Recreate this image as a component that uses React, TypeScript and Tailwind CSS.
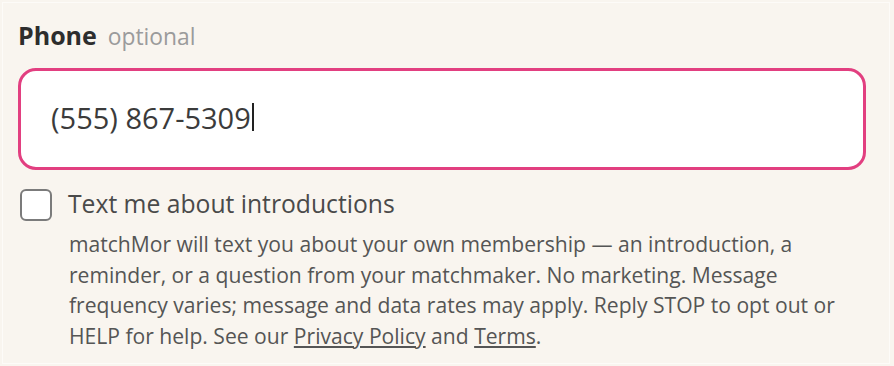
import React from "react";

export default function App() {
  const font = { fontFamily: '"Open Sans", "Noto Sans", sans-serif' };
  return (
    <div className="w-[894px] h-[366px] bg-[#f9f5ef] p-[2px]" style={font}>
      <div className="h-full w-[888px] border border-[#fdfbf8] pl-[15px] pt-[14px]">
        <div className="flex items-baseline gap-[11px] h-[38px]">
          <span className="text-[25px] font-bold text-[#2d2d2d]">Phone</span>
          <span className="text-[22.8px] text-[#9b9b9b]">optional</span>
        </div>
        <div className="mt-[13px] w-[848px] h-[102px] border-[3px] border-[#e23f80] rounded-[18px] bg-white flex items-center pl-[30px] pb-[4px]">
          <span className="text-[29px] text-[#3b3b3b] leading-none">(555) 867-5309</span>
          <span className="ml-[1px] w-[2px] h-[28px] bg-[#222]" />
        </div>
        <div className="mt-[18px] flex items-center gap-[16px]">
          <div className="ml-[2px] w-[32px] h-[32px] border-2 border-[#7b7b7b] rounded-[6px] bg-white" />
          <span className="text-[24.7px] text-[#4a4a4a] -mt-[3px]">Text me about introductions</span>
        </div>
        <p className="mt-[7px] ml-[51px] text-[21.1px] leading-[30.5px] text-[#555]">
          matchMor will text you about your own membership — an introduction, a<br />
          reminder, or a question from your matchmaker. No marketing. Message<br />
          frequency varies; message and data rates may apply. Reply STOP to opt out or<br />
          HELP for help. See our <span className="underline">Privacy Policy</span> and{" "}
          <span className="underline">Terms</span>.
        </p>
      </div>
    </div>
  );
}
